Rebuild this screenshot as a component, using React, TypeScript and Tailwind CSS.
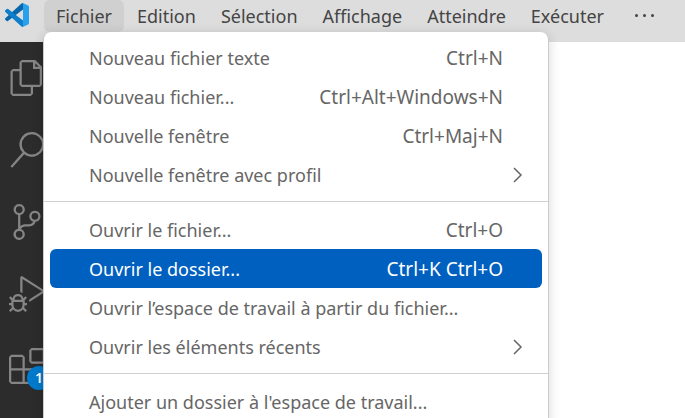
import React from "react";

type MenuEntry = { label: string; shortcut?: string; submenu?: boolean; selected?: boolean };

const menus = ["Fichier", "Edition", "Sélection", "Affichage", "Atteindre", "Exécuter"];

const groups: MenuEntry[][] = [
  [
    { label: "Nouveau fichier texte", shortcut: "Ctrl+N" },
    { label: "Nouveau fichier...", shortcut: "Ctrl+Alt+Windows+N" },
    { label: "Nouvelle fenêtre", shortcut: "Ctrl+Maj+N" },
    { label: "Nouvelle fenêtre avec profil", submenu: true },
  ],
  [
    { label: "Ouvrir le fichier...", shortcut: "Ctrl+O" },
    { label: "Ouvrir le dossier...", shortcut: "Ctrl+K Ctrl+O", selected: true },
    { label: "Ouvrir l’espace de travail à partir du fichier..." },
    { label: "Ouvrir les éléments récents", submenu: true },
  ],
  [{ label: "Ajouter un dossier à l'espace de travail..." }],
];

const activities = [
  {
    name: "Explorateur",
    d: "M17.5 0h-9L7 1.5V6H2.5L1 7.5v15.07L2.5 24h12.07L16 22.57V18h4.7l1.3-1.43V4.5L17.5 0zm0 2.12l2.38 2.38H17.5V2.12zm-3 20.38h-12v-15H7v9.07L8.5 18h6v4.5zm6-6h-12v-15H16V6h4.5v10.5z",
  },
  {
    name: "Rechercher",
    d: "M15.25 0a8.25 8.25 0 0 0-6.18 13.72L1 22.88l1.12 1 8.05-9.12A8.251 8.251 0 1 0 15.25.01V0zm0 15a6.75 6.75 0 1 1 0-13.5 6.75 6.75 0 0 1 0 13.5z",
  },
  {
    name: "Contrôle de code source",
    d: "M21.007 8.222A3.738 3.738 0 0 0 15.045 5.2a3.737 3.737 0 0 0 1.156 6.583 2.988 2.988 0 0 1-2.668 1.67h-2.99a4.456 4.456 0 0 0-2.989 1.165V7.4a3.737 3.737 0 1 0-1.494 0v9.117a3.776 3.776 0 1 0 1.816.099 2.99 2.99 0 0 1 2.668-1.667h2.99a4.484 4.484 0 0 0 4.223-3.039 3.736 3.736 0 0 0 3.25-3.687zM4.565 3.738a2.242 2.242 0 1 1 4.484 0 2.242 2.242 0 0 1-4.484 0zm4.484 16.441a2.242 2.242 0 1 1-4.484 0 2.242 2.242 0 0 1 4.484 0zm8.221-9.715a2.242 2.242 0 1 1 0-4.485 2.242 2.242 0 0 1 0 4.485z",
  },
  {
    name: "Exécuter et déboguer",
    d: "M10.94 13.5l-1.32 1.32a3.73 3.73 0 0 0-7.24 0L1.06 13.5 0 14.56l1.72 1.72-.22.22V18H0v1.5h1.5v.08c.077.489.214.966.41 1.42L0 22.94 1.06 24l1.65-1.65A4.308 4.308 0 0 0 6 24a4.31 4.31 0 0 0 3.29-1.65L10.94 24 12 22.94 10.09 21c.198-.464.336-.951.41-1.45v-.1H12V18h-1.5v-1.5l-.22-.22L12 14.56l-1.06-1.06zM6 13.5a2.25 2.25 0 0 1 2.25 2.25h-4.5A2.25 2.25 0 0 1 6 13.5zm3 6a3.33 3.33 0 0 1-3 3 3.33 3.33 0 0 1-3-3v-2.25h6v2.25zm14.76-9.9v1.26L13.5 17.37V15.6l8.5-5.37L9 2v9.46a5.07 5.07 0 0 0-1.5-.72V.63L8.64 0l15.12 9.6z",
  },
  {
    name: "Extensions",
    badge: "1",
    d: "M13.5 1.5L15 0h7.5L24 1.5V9l-1.5 1.5H15L13.5 9V1.5zm1.5 0V9h7.5V1.5H15zM0 15V6l1.5-1.5H9L10.5 6v7.5H18l1.5 1.5v7.5L18 24H1.5L0 22.5V15zm9-1.5V6H1.5v7.5H9zM9 15H1.5v7.5H9V15zm1.5 7.5H18V15h-7.5v7.5z",
  },
];

function Logo() {
  return (
    <svg viewBox="0 0 24 24" className="size-6 shrink-0" aria-hidden="true">
      <path
        fill="#0f7fcb"
        d="M.327 7.261A1 1 0 0 0 .326 8.74L16.505 23.5a1.492 1.492 0 0 0 1.704.29L18.004 17.448 2.925 6.002a.999.999 0 0 0-1.276.057z"
      />
      <path
        fill="#0868ac"
        d="M.327 16.739a1 1 0 0 1-.001-1.479L16.505.5a1.494 1.494 0 0 1 1.705-.29L18.004 6.552 2.926 17.997a.999.999 0 0 1-1.276-.057z"
      />
      <path fill="#0f7fcb" d="M.326 8.74L3.899 12l3.146 2.869 3.781-2.869L2.925 6.002z" />
      <path
        fill="#27a0ee"
        d="M23.15 2.587L18.21.21a1.494 1.494 0 0 0-1.705.29C17.1 0 18.004.4 18.004 1.2v21.6c0 .8-.9 1.2-1.5.7a1.492 1.492 0 0 0 1.704.29l4.942-2.377A1.5 1.5 0 0 0 24 20.06V3.939a1.5 1.5 0 0 0-.85-1.352z"
      />
    </svg>
  );
}

function MenuRow({ label, shortcut, submenu, selected }: MenuEntry) {
  return (
    <button
      type="button"
      role="menuitem"
      className={
        "flex h-[39px] w-full items-center justify-between rounded-md pr-[39px] pl-[39px] whitespace-nowrap " +
        (selected ? "bg-[#0060c0] text-white" : "text-[#666666]")
      }
    >
      <span>{label}</span>
      {shortcut && <span className="text-[19px]">{shortcut}</span>}
      {submenu && (
        <svg viewBox="0 0 10 16" className="-mr-5 h-4 w-[10px]" fill="none" stroke="currentColor" strokeWidth="1.5" aria-hidden="true">
          <path d="M1 1L8 8L1 15" />
        </svg>
      )}
    </button>
  );
}

export default function App() {
  return (
    <div className="relative flex h-screen flex-col overflow-hidden bg-white font-['Noto_Sans','Open_Sans',sans-serif] text-[18px] leading-6">
      <header className="flex h-[42px] shrink-0 items-start bg-[#dddddd] pl-[5px] text-[#444444]">
        <div className="flex h-[30px] items-center">
          <Logo />
        </div>
        <nav className="ml-[15px] flex gap-px" aria-label="Menu principal">
          {menus.map((name, i) => (
            <button
              key={name}
              type="button"
              className={"h-8 rounded-md px-3 " + (i === 0 ? "bg-[#d0d0d0]" : "")}
            >
              {name}
            </button>
          ))}
          <button type="button" aria-label="Plus" className="flex h-[30px] items-center gap-[5px] px-[18px]">
            <span className="size-[3px] rounded-full bg-current" />
            <span className="size-[3px] rounded-full bg-current" />
            <span className="size-[3px] rounded-full bg-current" />
          </button>
        </nav>
      </header>

      <div className="flex min-h-0 flex-1">
        <aside className="flex w-[54px] shrink-0 flex-col bg-[#2c2c2c] text-[#858585]">
          {activities.map((a) => (
            <button key={a.name} type="button" aria-label={a.name} className="relative flex h-[72px] shrink-0 items-center justify-center">
              <svg viewBox="0 0 24 24" className="size-9" fill="currentColor" aria-hidden="true">
                <path d={a.d} />
              </svg>
              {a.badge && (
                <span className="absolute right-[3px] bottom-3 flex size-6 items-center justify-center rounded-full bg-[#007acc] text-sm font-semibold text-white">
                  {a.badge}
                </span>
              )}
            </button>
          ))}
        </aside>
        <main className="flex-1 bg-white" />
      </div>

      <div
        role="menu"
        aria-label="Fichier"
        className="absolute top-8 left-[43px] w-[506px] rounded-lg border-x border-[#cccccc] bg-white py-1.5 shadow-[0_2px_12px_rgba(0,0,0,0.16)]"
      >
        {groups.map((group, i) => (
          <React.Fragment key={i}>
            {i > 0 && <hr className="mt-[7px] mb-2 border-t border-[#d0d0d0]" />}
            <div className="px-1.5">
              {group.map((entry) => (
                <MenuRow key={entry.label} {...entry} />
              ))}
            </div>
          </React.Fragment>
        ))}
      </div>
    </div>
  );
}
